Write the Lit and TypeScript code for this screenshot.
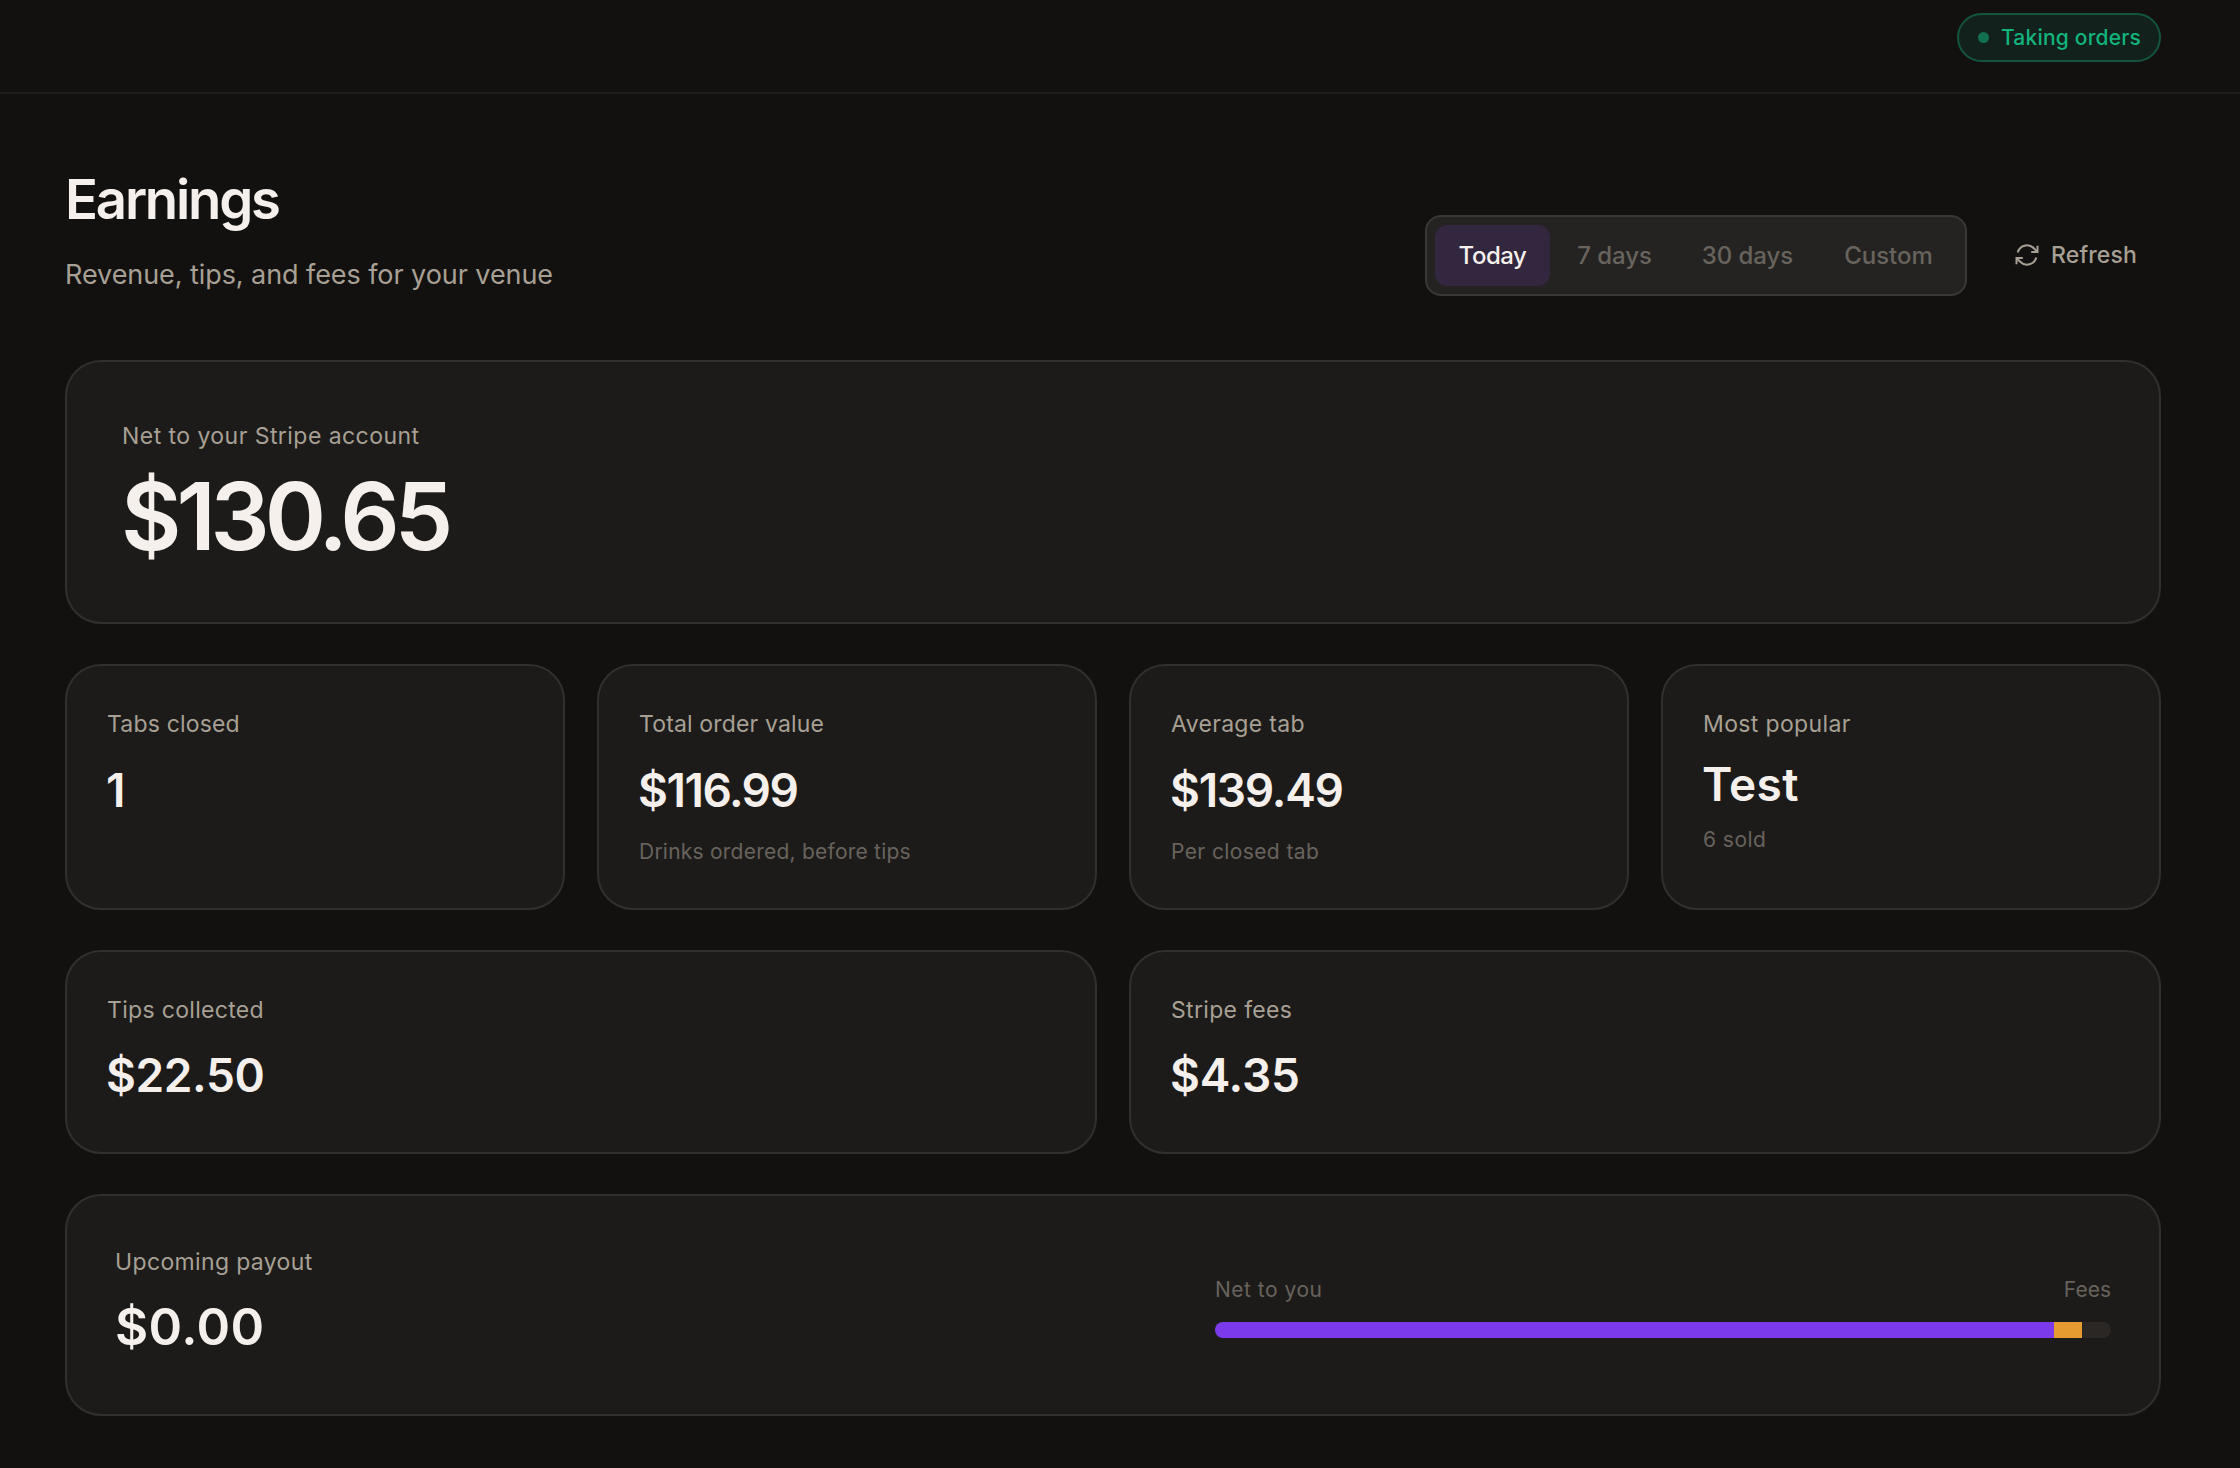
import { LitElement, html, css, nothing } from "lit";
import { customElement, property, state } from "lit/decorators.js";
import { classMap } from "lit/directives/class-map.js";
import { styleMap } from "lit/directives/style-map.js";

interface Copy {
  text: string;
  tracking?: number;
}

interface Stat {
  label: Copy;
  value: Copy;
  note?: Copy;
  named?: boolean;
}

const copy = (c: Copy, cls: string) =>
  html`<div class=${cls} style=${styleMap({ letterSpacing: `${c.tracking ?? 0}px` })}>${c.text}</div>`;

const NET = 130.65;
const FEES = 4.35;
const GROSS = 139.49;

const RANGES: { id: string; label: string }[] = [
  { id: "today", label: "Today" },
  { id: "week", label: "7 days" },
  { id: "month", label: "30 days" },
  { id: "custom", label: "Custom" },
];

const OVERVIEW: Stat[] = [
  {
    label: { text: "Tabs closed", tracking: 0.18 },
    value: { text: "1" },
  },
  {
    label: { text: "Total order value", tracking: 0.15 },
    value: { text: "$116.99", tracking: -1.48 },
    note: { text: "Drinks ordered, before tips", tracking: 0.23 },
  },
  {
    label: { text: "Average tab", tracking: 0.32 },
    value: { text: "$139.49", tracking: -1.26 },
    note: { text: "Per closed tab", tracking: 0.39 },
  },
  {
    label: { text: "Most popular", tracking: 0.36 },
    value: { text: "Test", tracking: 0.3 },
    note: { text: "6 sold", tracking: 0.46 },
    named: true,
  },
];

const EXTRAS: Stat[] = [
  {
    label: { text: "Tips collected", tracking: 0.32 },
    value: { text: "$22.50", tracking: -0.38 },
  },
  {
    label: { text: "Stripe fees", tracking: 0.33 },
    value: { text: "$4.35", tracking: -0.2 },
  },
];

@customElement("stat-card")
class StatCard extends LitElement {
  @property({ attribute: false }) stat!: Stat;
  @property({ type: Boolean, reflect: true }) compact = false;

  static styles = css`
    :host {
      display: block;
      box-sizing: border-box;
      min-width: 0;
      padding: 40px;
      border: 2px solid #30302e;
      border-radius: 36px;
      background: #1c1b19;
      white-space: nowrap;
    }
    :host([compact]) {
      padding-bottom: 41px;
    }
    .label {
      font-size: 23px;
      line-height: 36px;
      color: #a8a094;
    }
    .value {
      margin-top: 12px;
      margin-left: -1px;
      font-size: 46px;
      font-weight: 600;
      line-height: 72px;
      color: #f5f0ec;
    }
    :host([compact]) .value {
      margin-top: 11px;
    }
    .note {
      margin-top: 9px;
      font-size: 21px;
      line-height: 33px;
      color: #69635d;
    }
    .named .value {
      margin-top: 8px;
      line-height: 68px;
    }
    .named .note {
      margin-top: 5px;
    }
  `;

  render() {
    const s = this.stat;
    return html`<div class=${classMap({ body: true, named: !!s.named })}>
      ${copy(s.label, "label")} ${copy(s.value, "value")}
      ${s.note ? copy(s.note, "note") : nothing}
    </div>`;
  }
}

@customElement("app-root")
class AppRoot extends LitElement {
  @state() private range = "today";

  static styles = css`
    :host {
      display: block;
      box-sizing: border-box;
      min-height: 1468px;
      background: #12110f;
      color: #f5f0ec;
      font-family: Inter, "Liberation Sans", sans-serif;
      white-space: nowrap;
    }
    * {
      box-sizing: border-box;
    }
    button {
      margin: 0;
      border: 0;
      background: none;
      font-family: inherit;
      cursor: pointer;
    }
    .topbar {
      display: flex;
      justify-content: flex-end;
      align-items: flex-start;
      height: 94px;
      padding: 13px 79px 0 0;
      border-bottom: 2px solid #1f1e1c;
    }
    .status {
      display: flex;
      align-items: center;
      gap: 12px;
      width: 204px;
      height: 49px;
      padding-left: 19px;
      border: 2px solid #14553f;
      border-radius: 25px;
      background: #12211c;
      color: #12b47c;
      font-size: 21px;
      font-weight: 450;
      line-height: 45px;
      letter-spacing: 0.2px;
    }
    .dot {
      width: 11px;
      height: 11px;
      border-radius: 50%;
      background: #126f50;
    }
    .page {
      display: flex;
      flex-direction: column;
      gap: 40px;
      padding: 72px 79px 52px 65px;
    }
    .heading {
      display: flex;
      justify-content: space-between;
      height: 130px;
      margin-bottom: 24px;
    }
    .title {
      margin: 0;
      font-size: 54.5px;
      font-weight: 600;
      line-height: 67px;
      letter-spacing: -2.2px;
    }
    .subtitle {
      margin: 21px 0 0;
      font-size: 27px;
      line-height: 41px;
      letter-spacing: -0.07px;
      color: #a8a094;
    }
    .controls {
      display: flex;
      align-items: flex-start;
      gap: 23px;
      padding-top: 49px;
    }
    .segments {
      display: grid;
      grid-template-columns: 115px 121px 137px 137px;
      gap: 4px;
      height: 81px;
      padding: 8px;
      border: 2px solid #393836;
      border-radius: 16px;
      background: #242321;
    }
    .segment {
      padding: 0;
      border-radius: 12px;
      color: #69635d;
      font-size: 24px;
      font-weight: 450;
      line-height: 61px;
      letter-spacing: -0.05px;
    }
    .segment.active {
      background: #33263f;
      color: #f5f0ec;
      font-weight: 500;
      letter-spacing: -0.47px;
    }
    .refresh {
      display: flex;
      align-items: center;
      gap: 10px;
      height: 80px;
      padding: 0 24px 0 23px;
      color: #a8a094;
      font-size: 23px;
      font-weight: 500;
      line-height: 36px;
      letter-spacing: 0.14px;
    }
    .icon {
      width: 28px;
      height: 28px;
      fill: none;
      stroke: currentColor;
      stroke-width: 1.7;
      stroke-linecap: butt;
      stroke-linejoin: miter;
    }
    .card {
      border: 2px solid #30302e;
      border-radius: 36px;
      background: #1c1b19;
    }
    .label {
      font-size: 23px;
      line-height: 36px;
      color: #a8a094;
    }
    .hero {
      height: 264px;
      padding: 56px 54px;
    }
    .hero .label {
      padding-left: 1px;
    }
    .hero-value {
      margin-top: 12px;
      font-size: 93px;
      font-weight: 600;
      line-height: 100px;
    }
    .overview {
      display: grid;
      grid-template-columns: repeat(4, 1fr);
      gap: 32px;
    }
    .extras {
      display: grid;
      grid-template-columns: repeat(2, 1fr);
      gap: 32px;
    }
    .payout {
      display: flex;
      align-items: center;
      justify-content: space-between;
      padding: 48px;
    }
    .payout-value {
      margin-top: 8px;
      font-size: 51px;
      font-weight: 600;
      line-height: 78px;
    }
    .split {
      width: 896px;
    }
    .legend {
      display: flex;
      justify-content: space-between;
      margin-bottom: 16px;
      font-size: 21px;
      line-height: 33px;
      color: #69635d;
    }
    .bar {
      display: flex;
      height: 16px;
      overflow: hidden;
      border-radius: 8px;
      background: #2b2725;
    }
    .net {
      background: #7c3aed;
    }
    .fees {
      background: #e59b30;
    }
  `;

  render() {
    return html`
      <header class="topbar">
        <div class="status"><span class="dot"></span><span>Taking orders</span></div>
      </header>
      <main class="page">
        <section class="heading">
          <div>
            <h1 class="title">Earnings</h1>
            <p class="subtitle">Revenue, tips, and fees for your venue</p>
          </div>
          <div class="controls">
            <div class="segments">
              ${RANGES.map(
                (r) => html`<button
                  class=${classMap({ segment: true, active: r.id === this.range })}
                  @click=${() => (this.range = r.id)}
                >${r.label}</button>`
              )}
            </div>
            <button class="refresh">
              <svg class="icon" viewBox="0 0 24 24" aria-hidden="true">
                <path d="M15.6 9.348h5.415v-5.3M2.985 19.95v-5.298h5.415" />
                <path
                  d="M2.985 14.652l3.18 3.183a8.25 8.25 0 0 0 13.803-3.7M4.031 9.865a8.25 8.25 0 0 1 13.803-3.7l3.181 3.182"
                />
              </svg>
              <span>Refresh</span>
            </button>
          </div>
        </section>

        <section class="card hero">
          ${copy({ text: "Net to your Stripe account", tracking: 0.45 }, "label")}
          ${copy({ text: `$${NET.toFixed(2)}`, tracking: -5.1 }, "hero-value")}
        </section>

        <section class="overview">
          ${OVERVIEW.map((s) => html`<stat-card .stat=${s}></stat-card>`)}
        </section>

        <section class="extras">
          ${EXTRAS.map((s) => html`<stat-card compact .stat=${s}></stat-card>`)}
        </section>

        <section class="card payout">
          <div>
            ${copy({ text: "Upcoming payout", tracking: 0.35 }, "label")}
            ${copy({ text: "$0.00", tracking: 0.4 }, "payout-value")}
          </div>
          <div class="split">
            <div class="legend">
              ${copy({ text: "Net to you", tracking: 0.5 }, "key")}
              ${copy({ text: "Fees", tracking: 0 }, "key")}
            </div>
            <div class="bar">
              <div class="net" style=${styleMap({ width: `${(NET / GROSS) * 100}%` })}></div>
              <div class="fees" style=${styleMap({ width: `${(FEES / GROSS) * 100}%` })}></div>
            </div>
          </div>
        </section>
      </main>
    `;
  }
}
